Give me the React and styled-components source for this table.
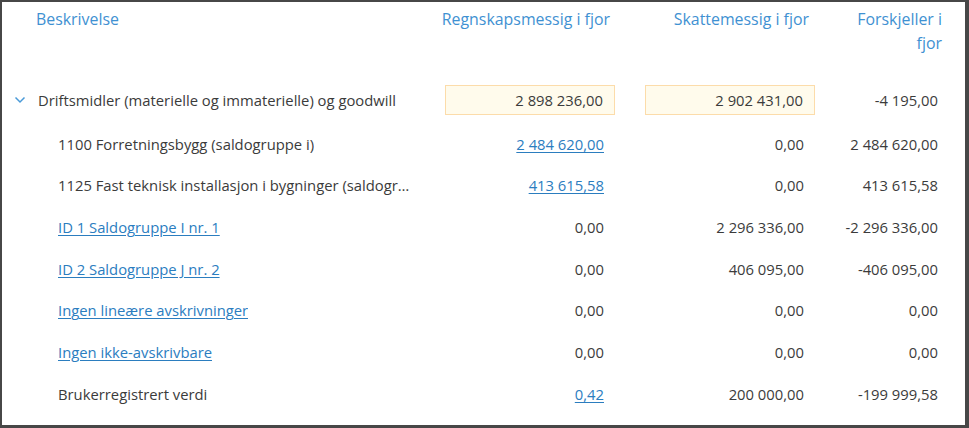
import React from "react";
import styled, { createGlobalStyle } from "styled-components";

const Global = createGlobalStyle`
  html, body { margin: 0; padding: 0; background: #474747; }
  body { font-family: "Open Sans", "Noto Sans", sans-serif; font-size: 14.8px; color: #3b3b3b; }
  * { box-sizing: border-box; }
`;

const Panel = styled.div`
  margin: 2px 4px 0 2px;
  width: 963px;
  height: 423px;
  background: #ffffff;
  overflow: hidden;
`;

const Grid = styled.div`
  display: grid;
  grid-template-columns: 428px 200px 200px 135px;
`;

const HeadCell = styled.div`
  color: #3f91d2;
  font-size: 15.9px;
  line-height: 24px;
  padding: 5px ${(p) => p.$pr ?? 20}px 21px ${(p) => p.$pl ?? 0}px;
  text-align: ${(p) => (p.$left ? "left" : "right")};
`;

const Cell = styled.div`
  height: ${(p) => (p.$tall ? "47px" : "41.67px")};
  display: flex;
  align-items: center;
  justify-content: ${(p) => (p.$left ? "flex-start" : "flex-end")};
  padding: 0 ${(p) => p.$pr ?? 26}px 0 ${(p) => p.$pl ?? 0}px;
  white-space: nowrap;
  min-width: 0;
`;

const Label = styled.span`
  overflow: hidden;
  text-overflow: ellipsis;
  white-space: nowrap;
  min-width: 0;
`;

const Link = styled.a`
  color: #2b7dbf;
  text-decoration: underline;
  text-underline-offset: 2px;
  cursor: pointer;
`;

const Toggle = styled.span`
  display: inline-flex;
  width: 24px;
  margin-left: 12px;
  color: #4a9ad8;
`;

const InputBox = styled.div`
  width: 170px;
  height: 30px;
  margin-right: -11px;
  background: #fffbec;
  border: 1px solid #fcdcaa;
  display: flex;
  align-items: center;
  justify-content: flex-end;
  padding-right: 11px;
  color: #3b3b3b;
`;

const Chevron = () => (
  <svg width="12" height="8" viewBox="0 0 12 8">
    <polyline points="1.5,1.5 6,6 10.5,1.5" fill="none" stroke="currentColor" strokeWidth="1.5" />
  </svg>
);

const rows = [
  { label: "1100 Forretningsbygg (saldogruppe i)", a: "2 484 620,00", aLink: true, b: "0,00", c: "2 484 620,00" },
  { label: "1125 Fast teknisk installasjon i bygninger (saldogruppe j)", a: "413 615,58", aLink: true, b: "0,00", c: "413 615,58" },
  { label: "ID 1 Saldogruppe I nr. 1", labelLink: true, a: "0,00", b: "2 296 336,00", c: "-2 296 336,00" },
  { label: "ID 2 Saldogruppe J nr. 2", labelLink: true, a: "0,00", b: "406 095,00", c: "-406 095,00" },
  { label: "Ingen lineære avskrivninger", labelLink: true, a: "0,00", b: "0,00", c: "0,00" },
  { label: "Ingen ikke-avskrivbare", labelLink: true, a: "0,00", b: "0,00", c: "0,00" },
  { label: "Brukerregistrert verdi", a: "0,42", aLink: true, b: "200 000,00", c: "-199 999,58" },
];

export default function App() {
  return (
    <>
      <Global />
      <Panel>
        <Grid>
          <HeadCell $left $pl={34}>Beskrivelse</HeadCell>
          <HeadCell>Regnskapsmessig i fjor</HeadCell>
          <HeadCell $pr={21}>Skattemessig i fjor</HeadCell>
          <HeadCell $pr={23} $pl={12}>Forskjeller i fjor</HeadCell>

          <Cell $left $tall $pr={18}>
            <Toggle><Chevron /></Toggle>
            <Label>Driftsmidler (materielle og immaterielle) og goodwill</Label>
          </Cell>
          <Cell $tall>
            <InputBox>2 898 236,00</InputBox>
          </Cell>
          <Cell $tall>
            <InputBox>2 902 431,00</InputBox>
          </Cell>
          <Cell $tall $pr={27}>-4 195,00</Cell>

          {rows.map((r) => (
            <React.Fragment key={r.label}>
              <Cell $left $pl={56} $pr={18}>
                <Label>{r.labelLink ? <Link>{r.label}</Link> : r.label}</Label>
              </Cell>
              <Cell>{r.aLink ? <Link>{r.a}</Link> : r.a}</Cell>
              <Cell>{r.b}</Cell>
              <Cell $pr={27}>{r.c}</Cell>
            </React.Fragment>
          ))}
        </Grid>
      </Panel>
    </>
  );
}
